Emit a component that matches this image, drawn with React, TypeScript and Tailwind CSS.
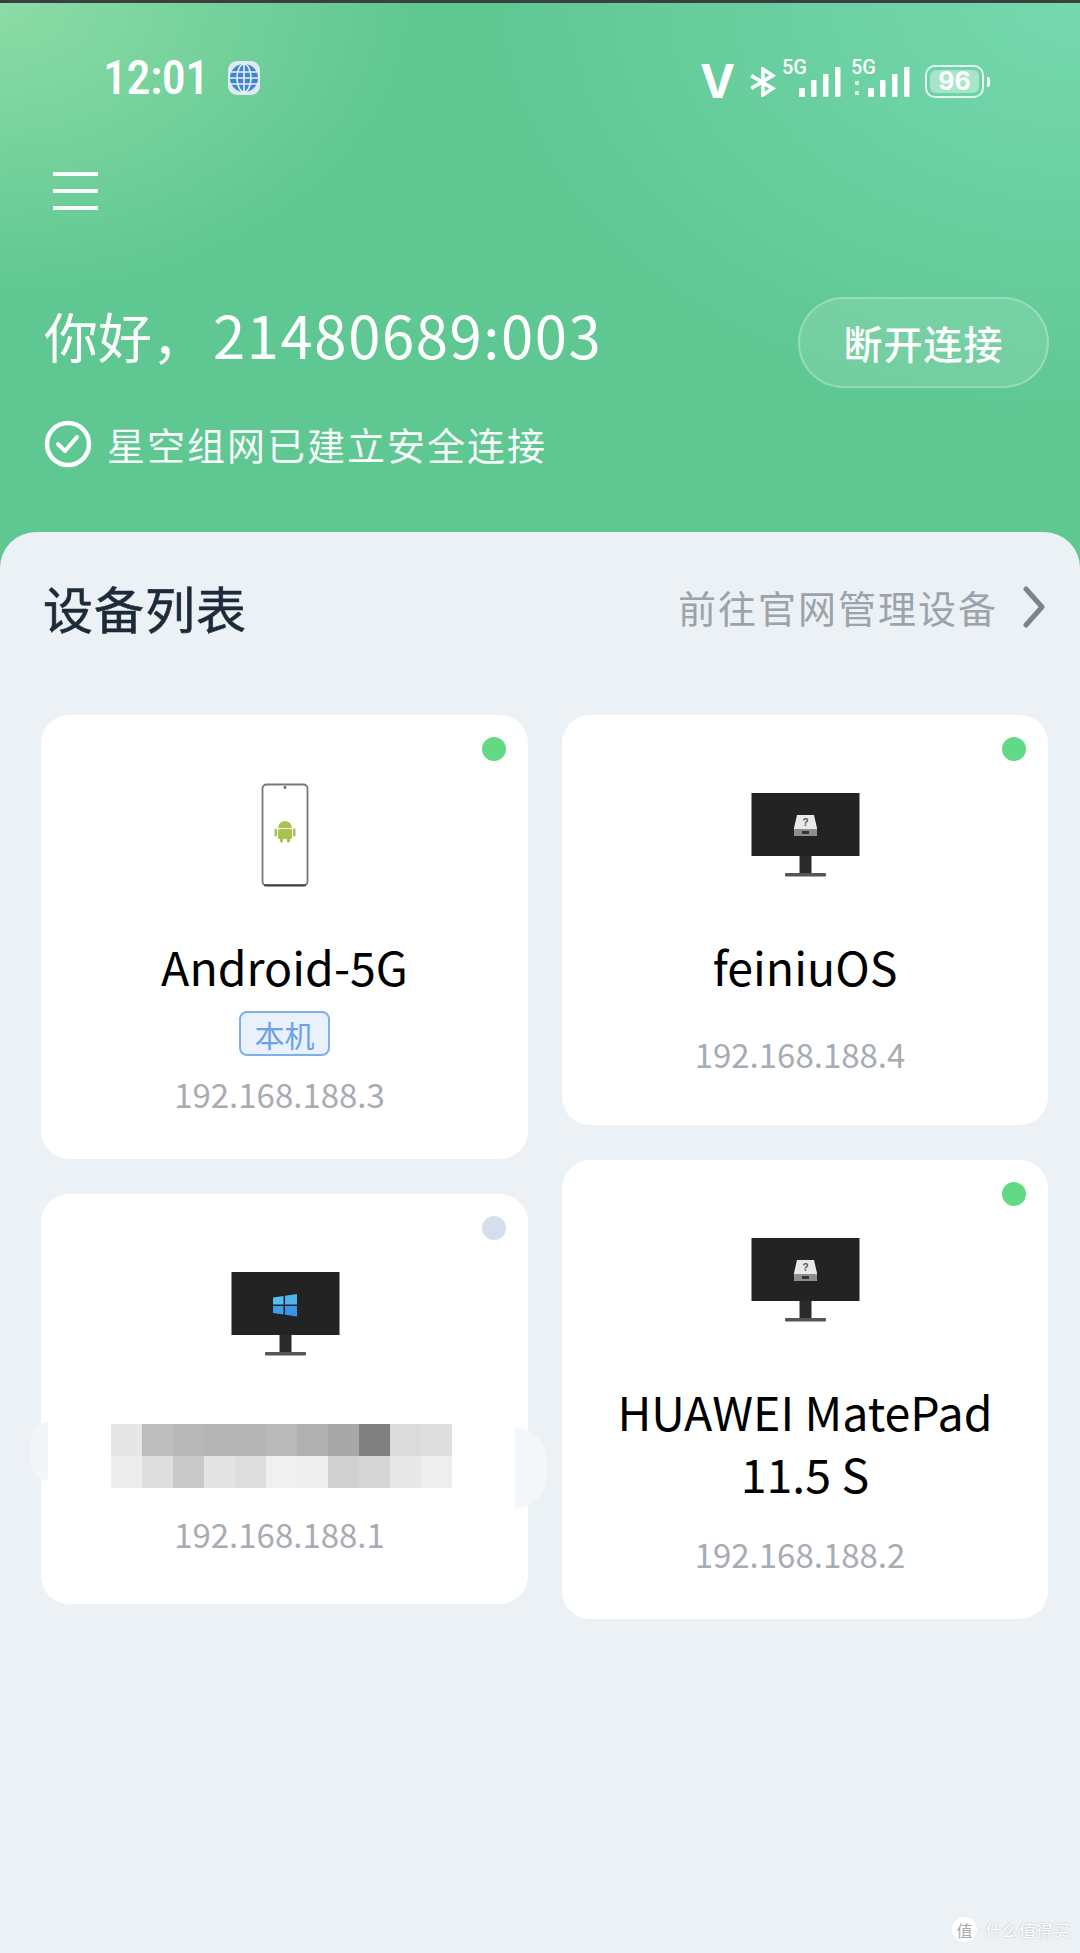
import React from 'react';

const cjk = 'font-["Noto_Sans_CJK_SC",sans-serif]';

const Monitor = ({ windows }: { windows?: boolean }) => (
  <svg width="110" height="86" viewBox="0 0 110 86" className="ml-[2px] mt-[4px]">
    <rect x="0.5" y="1" width="108" height="63" fill="#232323" />
    <rect x="48.5" y="64" width="12" height="18" fill="#2a2a2a" />
    <rect x="34" y="81" width="41" height="3.5" rx="1" fill="#555" />
    {windows ? (
      <g>
        <path d="M42 26.5 L52.5 25 V33.5 H42 Z" fill="#58bdf0" />
        <path d="M54 24.8 L66 23 V33.5 H54 Z" fill="#4fb4ee" />
        <path d="M42 35 H52.5 V43.5 L42 42 Z" fill="#3f9ee8" />
        <path d="M54 35 H66 V45.5 L54 43.7 Z" fill="#3a95e6" />
      </g>
    ) : (
      <g>
        <path d="M46 23 H63 L66 36 V44 H43 V36 Z" fill="#e9e9e9" />
        <rect x="43" y="37" width="23" height="7" rx="1" fill="#8d8d8d" />
        <rect x="51" y="39" width="7" height="3" fill="#333" />
        <text x="54.5" y="34" textAnchor="middle" fontSize="10" fontWeight="700" fill="#555" fontFamily="Liberation Sans">?</text>
      </g>
    )}
  </svg>
);

const Phone = () => (
  <svg width="48" height="104" viewBox="0 0 48 104" className="mt-[4px]">
    <rect x="1.5" y="1.5" width="45" height="101" rx="4" fill="#fff" stroke="#777" strokeWidth="1.8" />
    <path d="M3 102.2 H45" stroke="#444" strokeWidth="2" />
    <circle cx="24" cy="4.5" r="1.4" fill="#666" />
    <g fill="#a8c34f">
      <path d="M17 45 a7 7 0 0 1 14 0 Z" />
      <rect x="17" y="46" width="14" height="10" rx="1.5" />
      <rect x="13.5" y="45.5" width="2.5" height="8" rx="1.2" />
      <rect x="32" y="45.5" width="2.5" height="8" rx="1.2" />
      <rect x="19" y="55" width="3" height="4.5" rx="1.2" />
      <rect x="26" y="55" width="3" height="4.5" rx="1.2" />
    </g>
  </svg>
);

const Dot = ({ off }: { off?: boolean }) => (
  <span className={`absolute right-[22px] top-[22px] h-[24px] w-[24px] rounded-full ${off ? 'bg-[#d5deec]' : 'bg-[#62d985]'}`} />
);

const Signal = ({ dots }: { dots?: boolean }) => (
  <svg width="62" height="44" viewBox="0 0 62 44" className="block">
    <text x="0" y="19" fontSize="20" fontWeight="500" fill="#fff" fontFamily="Roboto">5G</text>
    {dots && (
      <g fill="#fff" opacity="0.7">
        <rect x="4" y="26" width="4" height="4" />
        <rect x="4" y="36" width="4" height="4" />
      </g>
    )}
    <g fill="#fff">
      <rect x="17" y="33" width="6" height="9" rx="1" />
      <rect x="29" y="25" width="5.5" height="17" rx="1" />
      <rect x="41" y="19" width="5.5" height="23" rx="1" />
      <rect x="53" y="12" width="5.5" height="30" rx="1" />
    </g>
  </svg>
);

const mosaic = [
  ['#e6e6e6', '#bdbdbd', '#b8b8b8', '#b4b4b4', '#b5b5b5', '#bababa', '#b0b0b0', '#a8a8a8', '#808080', '#dcdcdc', '#dedede'],
  ['#ececec', '#dedede', '#cacaca', '#e4e4e4', '#dddddd', '#f0f0f0', '#eeeeee', '#d0d0d0', '#d6d6d6', '#e8e8e8', '#eeeeee'],
];

const Ip = ({ children, className }: { children: string; className: string }) => (
  <div className={`h-[50px] pr-[10px] text-[33px] leading-[50px] text-[#a7acb3] ${className}`}>{children}</div>
);

const IconBox = ({ children }: { children: React.ReactNode }) => (
  <div className="flex h-[204px] items-center justify-center">{children}</div>
);

const Title = ({ children }: { children: React.ReactNode }) => (
  <div className="text-center text-[46.5px] leading-[62px] text-black">{children}</div>
);

export default function App() {
  return (
    <div className={`flex h-[1953px] w-[1080px] flex-col overflow-hidden bg-[#ebf1f4] ${cjk}`}>
      <div className="h-[572px] shrink-0 bg-[#5fc792] bg-[radial-gradient(ellipse_420px_300px_at_0%_0%,#8cdca6_0%,transparent_100%),radial-gradient(ellipse_600px_420px_at_100%_0%,#75d8af_0%,transparent_100%)] text-white">
        <div className="h-[3px] bg-[#3b403e]" />
        <div className="mt-[55px] flex h-[40px] items-center justify-between pl-[103px] pr-[90px]">
          <div className="flex items-center gap-[18px]">
            <span className="font-['Roboto'] text-[48px] font-medium leading-[40px] tracking-[-0.5px] [font-stretch:condensed]">12:01</span>
            <svg width="34" height="38" viewBox="0 0 34 36">
              <rect x="1" y="1" width="32" height="34" rx="9" fill="#dfeaf3" />
              <circle cx="17" cy="18" r="14" fill="#3f86cf" />
              <g stroke="#e6f0f8" strokeWidth="1.6" fill="none">
                <ellipse cx="17" cy="18" rx="7" ry="14" />
                <path d="M17 4 V32 M4 12 H30 M3 18 H31 M4 24 H30" />
              </g>
            </svg>
          </div>
          <div className="flex items-end">
            <span className="mr-[13px] font-['Inter'] text-[47px] font-bold leading-[40px]">V</span>
            <svg width="30" height="30" viewBox="0 0 28 28" className="mb-[4px] mr-[4px]" fill="none" stroke="#fff" strokeWidth="3.4">
              <path d="M3 8 L23 20 L14 26 V2 L23 8 L3 20" />
            </svg>
            <div className="mb-[2px] mr-[7px]"><Signal /></div>
            <div className="mb-[2px] mr-[12px]"><Signal dots /></div>
            <div className="mb-[3px] flex items-center gap-[3px]">
              <div className="flex h-[33px] w-[59px] items-center justify-center rounded-[10px] border-2 border-white/80 p-[3px]">
                <div className="flex h-full w-full items-center justify-center rounded-[6px] bg-white/40 font-['Inter'] text-[25px] font-bold leading-none">96</div>
              </div>
              <div className="h-[10px] w-[3px] rounded-r-full bg-white" />
            </div>
          </div>
        </div>

        <div className="ml-[53px] mt-[74px] flex w-[45px] flex-col gap-[13px]">
          <span className="h-[4px] bg-white/95" />
          <span className="h-[4px] bg-white/95" />
          <span className="h-[4px] bg-white/95" />
        </div>

        <div className="mt-[87px] flex items-start justify-between pl-[44px] pr-[31px]">
          <div className="pt-[2px] text-[54px] leading-[70px]">
            你好，<span className="ml-[7px] text-[58px] tracking-[1.6px]">21480689:003</span>
          </div>
          <button className="flex h-[91px] w-[251px] items-center justify-center rounded-full border-2 border-white/25 bg-white/[0.12] text-[39px] font-medium tracking-[1px] text-white">
            断开连接
          </button>
        </div>

        <div className="mt-[31px] flex items-center pl-[44px]">
          <svg width="48" height="48" viewBox="0 0 48 48" fill="none" stroke="#fff" strokeWidth="4.5" className="mr-[15px]">
            <circle cx="24" cy="24" r="21" />
            <path d="M14 24 L21 31 L33 17" strokeWidth="4" strokeLinecap="round" strokeLinejoin="round" />
          </svg>
          <span className="text-[38px] leading-[50px] tracking-[2px] text-white/95">星空组网已建立安全连接</span>
        </div>
      </div>

      <div className="-mt-[40px] flex-1 rounded-t-[36px] bg-[#ebf1f4]">
        <div className="mt-[40px] flex h-[70px] items-center justify-between pl-[43px] pr-[34px]">
          <span className="text-[50px] font-normal leading-[70px] tracking-[1px] text-[#1d2a3a] [-webkit-text-stroke:0.6px_#1d2a3a]">设备列表</span>
          <div className="flex items-center gap-[24px]">
            <span className="text-[38px] leading-[50px] tracking-[2px] text-[#9ca3aa]">前往官网管理设备</span>
            <svg width="24" height="42" viewBox="0 0 24 42" fill="none" stroke="#7c858d" strokeWidth="5" strokeLinecap="round" strokeLinejoin="round">
              <path d="M4 3 L20 21 L4 39" />
            </svg>
          </div>
        </div>

        <div className="mt-[73px] flex gap-[34px] pl-[41px] pr-[32px]">
          <div className="flex w-[487px] flex-col gap-[35px]">
            <div className="relative flex h-[444px] flex-col items-center rounded-[28px] bg-white pt-[16px]">
              <Dot />
              <IconBox><Phone /></IconBox>
              <Title>Android-5G</Title>
              <div className="mt-[14px] flex h-[45px] w-[91px] items-center justify-center rounded-[8px] border-2 border-[#80aeea] bg-[#e9f1fd] text-[30px] leading-none text-[#6fa1e8]">本机</div>
              <Ip className="mt-[13px]">192.168.188.3</Ip>
            </div>

            <div className="relative flex h-[410px] flex-col items-center rounded-[28px] bg-white pt-[16px]">
              <Dot off />
              <IconBox><Monitor windows /></IconBox>
              <div className="mr-[6px] mt-[10px] grid grid-cols-[repeat(11,31px)] grid-rows-[32px_32px]">
                {mosaic.flat().map((color, i) => (
                  <span key={i} style={{ backgroundColor: color }} />
                ))}
              </div>
              <Ip className="mt-[21px]">192.168.188.1</Ip>
              <span className="absolute left-[-10px] top-[228px] h-[58px] w-[17px] rounded-l-full bg-[#f3f6f8]" />
              <span className="absolute left-[474px] top-[234px] h-[80px] w-[32px] rounded-r-full bg-[#f4f7f9]" />
            </div>
          </div>

          <div className="flex w-[486px] flex-col gap-[35px]">
            <div className="relative flex h-[410px] flex-col items-center rounded-[28px] bg-white pt-[16px]">
              <Dot />
              <IconBox><Monitor /></IconBox>
              <Title>feiniuOS</Title>
              <Ip className="mt-[32px]">192.168.188.4</Ip>
            </div>

            <div className="relative flex h-[459px] flex-col items-center rounded-[28px] bg-white pt-[16px]">
              <Dot />
              <IconBox><Monitor /></IconBox>
              <Title>HUAWEI MatePad<br />11.5 S</Title>
              <Ip className="mt-[25px]">192.168.188.2</Ip>
            </div>
          </div>
        </div>

        <div className="mt-[298px] flex items-center justify-end gap-[8px] pr-[10px]">
          <span className="flex h-[25px] w-[25px] items-center justify-center rounded-full bg-white text-[16px] leading-none text-[#a9a9a9]">值</span>
          <span className="text-[17px] leading-[25px] text-white [text-shadow:0_0_2px_#b0b0b0]">什么值得买</span>
        </div>
      </div>
    </div>
  );
}
